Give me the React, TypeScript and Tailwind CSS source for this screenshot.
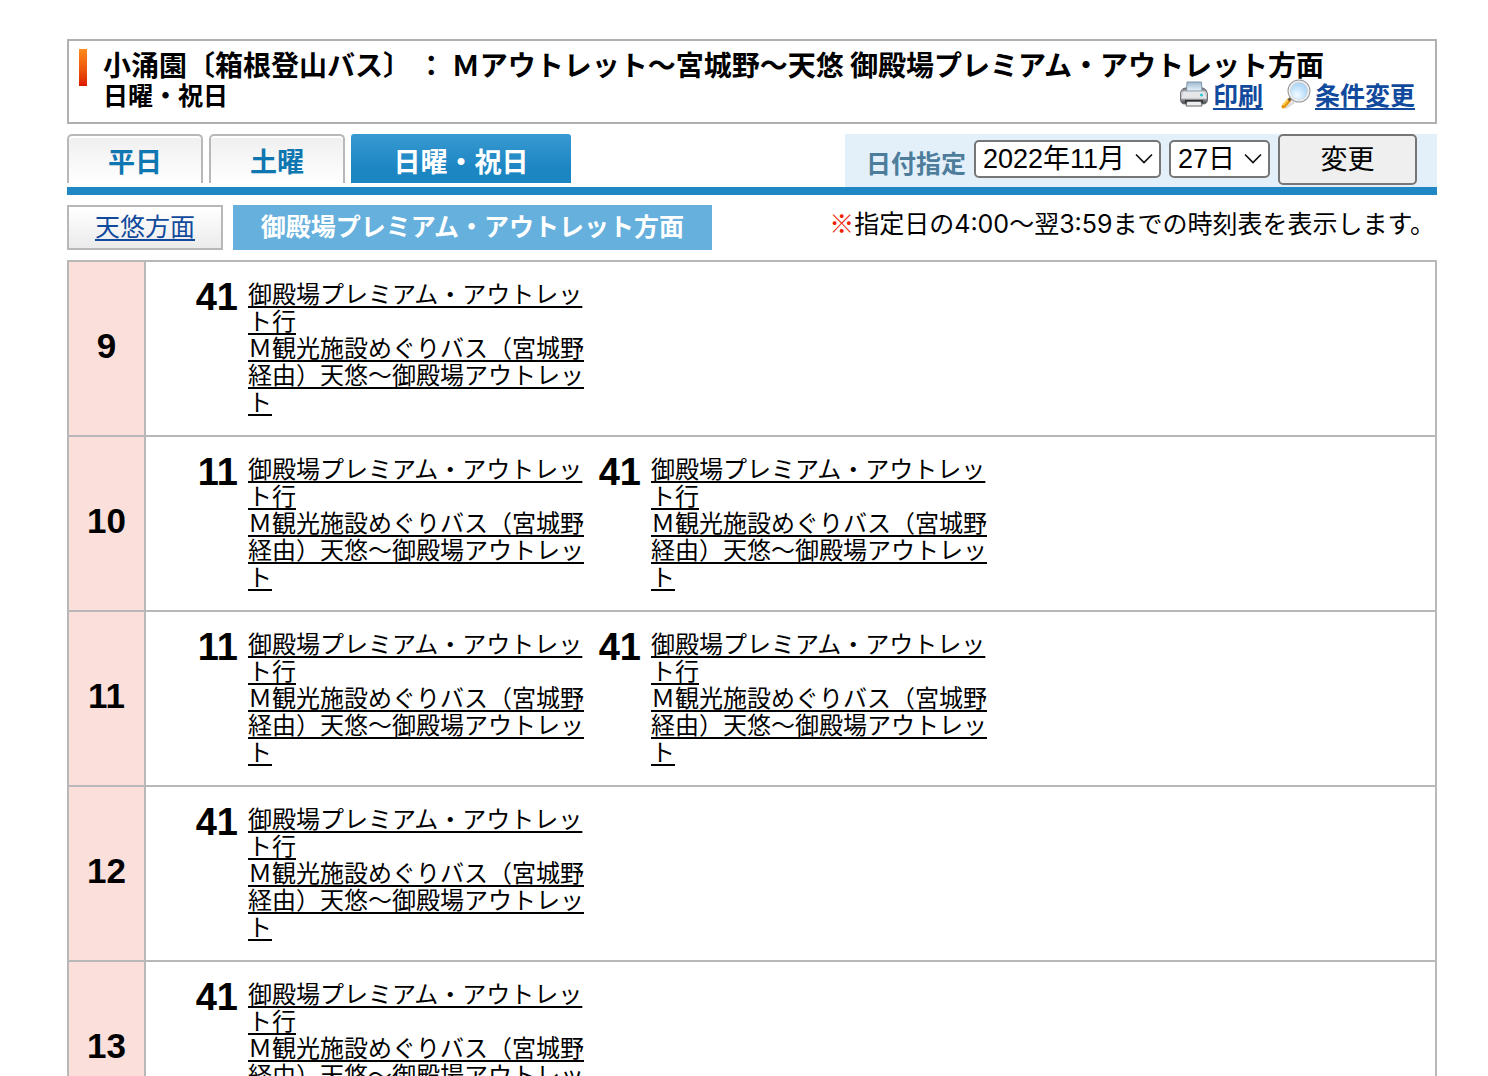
import type { ReactNode } from 'react';

const DEST = '御殿場プレミアム・アウトレット行';
const ROUTE = 'Ｍ観光施設めぐりバス（宮城野経由）天悠〜御殿場アウトレット';

const timetable: { hour: number; minutes: number[] }[] = [
  { hour: 9, minutes: [41] },
  { hour: 10, minutes: [11, 41] },
  { hour: 11, minutes: [11, 41] },
  { hour: 12, minutes: [41] },
  { hour: 13, minutes: [41] },
];

function PrinterIcon() {
  return (
    <svg width="30" height="28" viewBox="0 0 30 28" aria-hidden="true">
      <defs>
        <linearGradient id="pr-body" x1="0" y1="0" x2="0" y2="1">
          <stop offset="0" stopColor="#5f6266" />
          <stop offset="0.3" stopColor="#d5d7d9" />
          <stop offset="0.6" stopColor="#b4b6b9" />
          <stop offset="1" stopColor="#3c3e41" />
        </linearGradient>
        <linearGradient id="pr-paper" x1="0" y1="0" x2="0" y2="1">
          <stop offset="0" stopColor="#9db9d0" />
          <stop offset="1" stopColor="#eaf4fb" />
        </linearGradient>
      </defs>
      <path d="M6 8h18q4 1 4.500 6v5q0 5-4 5h-19q-4 0-4-5v-5q0-5 4.500-6z" fill="url(#pr-body)" stroke="#6c6e72" />
      <path d="M8 2h14.500l.5 9h-15.500z" fill="url(#pr-paper)" stroke="#7f93a6" />
      <path d="M5 11.500h20l2.500 6h-25z" fill="#e4e6e8" />
      <path d="M2.500 18h25" stroke="#fafafa" />
      <circle cx="22.500" cy="15" r="1.500" fill="#25c8d8" />
      <path d="M6 20h18v3h-18z" fill="#2e3032" />
      <path d="M8 21.500h14l1 4.500h-16z" fill="#eeeeef" stroke="#66686b" />
    </svg>
  );
}

function MagnifierIcon() {
  return (
    <svg width="30" height="30" viewBox="0 0 30 30" aria-hidden="true">
      <defs>
        <radialGradient id="mg-lens" cx="0.4" cy="0.7" r="0.7">
          <stop offset="0" stopColor="#f4fbff" />
          <stop offset="0.5" stopColor="#c5e4fb" />
          <stop offset="1" stopColor="#a3d0f4" />
        </radialGradient>
      </defs>
      <path d="M4 29l9-6" stroke="#ddd" strokeWidth="3" />
      <path d="M2.500 27.500l6-6.500" stroke="#e8940c" strokeWidth="4" strokeLinecap="round" />
      <path d="M2 26l5.500-6" stroke="#ffd257" strokeWidth="2" />
      <path d="M7.500 21.500l3.500-3.500" stroke="#6d5a45" strokeWidth="3" />
      <circle cx="18" cy="12" r="10" fill="url(#mg-lens)" stroke="#97999d" strokeWidth="3" />
      <circle cx="18" cy="12" r="9.500" fill="none" stroke="#eceef0" strokeWidth="2" />
    </svg>
  );
}

function Select({ label, value, className }: { label: string; value: string; className: string }) {
  return (
    <div className={`relative ${className}`}>
      <select
        aria-label={label}
        defaultValue={value}
        className="block h-[38px] w-full appearance-none rounded-[5px] border-2 border-[#767676] bg-white pl-[7px] font-['Liberation_Sans','Noto_Sans_CJK_JP',sans-serif] text-[27px] leading-[34px] text-black"
      >
        <option>{value}</option>
      </select>
      <svg className="pointer-events-none absolute top-[13px] right-[8px]" width="18" height="12" viewBox="0 0 18 12" aria-hidden="true">
        <path d="M1 1.500l8 8 8-8" fill="none" stroke="#111" strokeWidth="1.700" />
      </svg>
    </div>
  );
}

function ToolLink({ icon, children }: { icon: ReactNode; children: ReactNode }) {
  return (
    <a href="#" className="flex items-center gap-1 text-[#114a9c]">
      {icon}
      <span className="underline decoration-2 underline-offset-[3px]">{children}</span>
    </a>
  );
}

const tab =
  'h-[49px] w-[136px] rounded-t-[5px] border-2 border-b-0 border-[#b8b8b8] bg-linear-to-b from-[#efefef] to-white pt-[6px] text-[27px] leading-[40px] font-bold text-[#0e76b0] shadow-[inset_0_2px_0_#fff]';

export default function App() {
  return (
    <main className="bg-white pt-[39px] pr-[51px] pl-[67px] font-[Inter,'Noto_Sans_CJK_JP',sans-serif] text-black">
      <header className="flex h-[85px] items-start border-2 border-[#b0b0b0] pt-2 pl-[10px]">
        <div className="h-[37px] w-2 shrink-0 bg-linear-to-b from-[#ff8a1c] to-[#dc1400]" />
        <div className="ml-4 flex-1 font-['Noto_Sans_CJK_JP',sans-serif] font-bold">
          <h1 className="text-[28px] leading-[30px] whitespace-nowrap">
            小涌園〔箱根登山バス〕 ： Ｍアウトレット〜宮城野〜天悠 御殿場プレミアム・アウトレット方面
          </h1>
          <div className="flex items-center justify-between pr-5 text-[25px] leading-[28px]">
            <p>日曜・祝日</p>
            <div className="flex gap-[18px]">
              <ToolLink icon={<PrinterIcon />}>印刷</ToolLink>
              <ToolLink icon={<MagnifierIcon />}>条件変更</ToolLink>
            </div>
          </div>
        </div>
      </header>

      <div className="mt-[10px] flex h-[61px] items-start justify-between border-b-8 border-[#1f88c4]">
        <div className="flex gap-[6px]">
          <button type="button" className={tab}>平日</button>
          <button type="button" className={tab}>土曜</button>
          <button
            type="button"
            className="h-[49px] w-[220px] rounded-t-[3px] bg-linear-to-b from-[#3799d1] to-[#1c86c3] to-70% pt-2 text-[27px] leading-[40px] font-bold text-white"
          >
            日曜・祝日
          </button>
        </div>
        <form className="flex h-[53px] items-start bg-[#e3f0fa] pr-5 pl-[21px]">
          <span className="mr-[8px] pt-3 text-[25px] leading-[36px] font-bold text-[#4d7d9b]">日付指定</span>
          <Select label="年月" value="2022年11月" className="mt-[6px] mr-2 w-[187px]" />
          <Select label="日" value="27日" className="mt-[6px] mr-2 w-[101px]" />
          <button type="button" className="h-[51px] w-[139px] rounded-[5px] border-2 border-[#767676] bg-[#efefef] text-[27px] leading-[40px]">
            変更
          </button>
        </form>
      </div>

      <div className="mt-[10px] flex items-start justify-between">
        <div className="flex gap-[10px] text-[25px]">
          <a href="#" className="flex h-[45px] w-[156px] items-center justify-center border-2 border-[#b8b8b8] bg-linear-to-b from-white to-[#ebebeb] text-[#114a9c] underline decoration-2 underline-offset-[3px]">
            天悠方面
          </a>
          <span className="flex h-[45px] w-[479px] items-center justify-center bg-[#65b0dc] font-bold text-white">
            御殿場プレミアム・アウトレット方面
          </span>
        </div>
        <p className="pr-[2px] text-[25px] leading-[34px]">
          <span className="font-['Noto_Sans_CJK_JP',sans-serif] text-[#f02000]">※</span>
          指定日の4:00〜翌3:59までの時刻表を表示します。
        </p>
      </div>

      <table className="mt-[10px] w-full border-collapse">
        <tbody>
          {timetable.map(({ hour, minutes }) => (
            <tr key={hour} className="h-[175px]">
              <th scope="row" className="w-[77px] border-2 border-[#b8b8b8] bg-[#fadfdb] pb-1 font-['Liberation_Sans',sans-serif] text-[35px] font-bold">
                {hour}
              </th>
              <td className="border-2 border-[#b8b8b8] pt-[17px] pl-[43px] align-top">
                <div className="flex flex-wrap">
                  {minutes.map((m) => (
                    <div key={m} className="flex w-[403px] items-start gap-[10px]">
                      <span className="w-[49px] text-right font-['Liberation_Sans',sans-serif] text-[38px] leading-[36px] font-bold">{m}</span>
                      <a
                        href="#"
                        className="flex-1 font-['Noto_Sans_CJK_JP',sans-serif] text-[24px] leading-[27px] underline decoration-2 underline-offset-[3px]"
                      >
                        {DEST}
                        <br />
                        {ROUTE}
                      </a>
                    </div>
                  ))}
                </div>
              </td>
            </tr>
          ))}
        </tbody>
      </table>
    </main>
  );
}
